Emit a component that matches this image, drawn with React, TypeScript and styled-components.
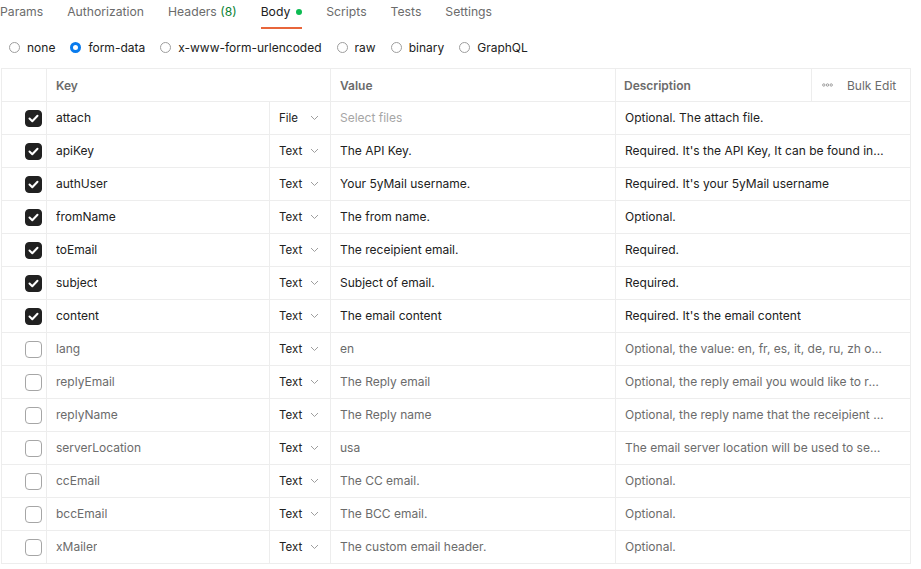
import React from "react";
import styled, { createGlobalStyle } from "styled-components";

const GlobalStyle = createGlobalStyle`
  body {
    margin: 0;
    background: #ffffff;
    font-family: Inter, "Noto Sans", sans-serif;
    font-size: 12px;
    color: #212121;
  }
`;

const Page = styled.div`
  width: 921px;
  height: 569px;
  overflow: hidden;
`;

const Tabs = styled.div`
  display: flex;
  gap: 24px;
  height: 29px;
  align-items: flex-start;
`;

const Tab = styled.div<{ $active?: boolean }>`
  display: flex;
  align-items: center;
  gap: 6px;
  height: 29px;
  padding-bottom: 4px;
  box-sizing: border-box;
  font-size: 12.2px;
  color: ${(p) => (p.$active ? "#212121" : "#6b6b6b")};
  border-bottom: 2px solid ${(p) => (p.$active ? "#e8663b" : "transparent")};
`;

const Count = styled.span`
  color: #0b8235;
`;

const Dot = styled.span`
  width: 6px;
  height: 6px;
  border-radius: 50%;
  background: #0cbb52;
`;

const Modes = styled.div`
  display: flex;
  align-items: center;
  gap: 15px;
  height: 36px;
  margin-bottom: 3px;
  padding-left: 9px;
`;

const Mode = styled.label`
  display: flex;
  align-items: center;
  gap: 7px;
  font-size: 12px;
  color: #212121;
`;

const Radio = styled.span<{ $on?: boolean }>`
  box-sizing: border-box;
  width: 11px;
  height: 11px;
  border-radius: 50%;
  border: ${(p) => (p.$on ? "3.5px solid #097bed" : "1px solid #9e9e9e")};
  background: #fff;
`;

const Table = styled.div`
  margin-left: 1px;
  width: 909px;
  border-top: 1px solid #ededed;
  border-left: 1px solid #ededed;
`;

const Row = styled.div`
  display: grid;
  grid-template-columns: 45px 223px 61px 285px 295px;
  height: 33px;
`;

const Cell = styled.div`
  box-sizing: border-box;
  display: flex;
  align-items: center;
  padding: 0 9px 1px;
  border-right: 1px solid #ededed;
  border-bottom: 1px solid #ededed;
  overflow: hidden;
  white-space: nowrap;
  font-size: 12px;
`;

const DescCell = styled(Cell)`
  padding-right: 26px;
`;

const CheckCell = styled(Cell)`
  justify-content: flex-end;
  padding: 0 4px 0 0;
`;

const HeadCell = styled(Cell)<{ $span?: number }>`
  grid-column: span ${(p) => p.$span ?? 1};
  padding-bottom: 0;
  font-weight: 600;
  color: #6b6b6b;
`;

const DescHead = styled(Cell)`
  padding: 0;
`;

const DescTitle = styled.div`
  flex: 1;
  height: 100%;
  display: flex;
  align-items: center;
  padding-left: 8px;
  font-weight: 600;
  color: #6b6b6b;
  border-right: 1px solid #ededed;
`;

const BulkEdit = styled.div`
  box-sizing: border-box;
  flex: 0 0 98px;
  display: flex;
  align-items: center;
  gap: 14px;
  padding-left: 10px;
  color: #6b6b6b;
`;

const Text = styled.span<{ $tone: "main" | "muted" | "hint" }>`
  color: ${(p) =>
    p.$tone === "main" ? "#212121" : p.$tone === "muted" ? "#6b6b6b" : "#a6a6a6"};
  overflow: hidden;
  text-overflow: ellipsis;
`;

const TypeCell = styled(Cell)`
  justify-content: space-between;
  padding: 0 11px 0 9px;
`;

const TypeLabel = styled.span`
  color: #212121;
  font-size: 11.5px;
  line-height: 14px;
`;

const Box = styled.span<{ $on: boolean }>`
  box-sizing: border-box;
  width: 17px;
  height: 17px;
  border-radius: 4px;
  display: flex;
  align-items: center;
  justify-content: center;
  background: ${(p) => (p.$on ? "#212121" : "#fff")};
  border: 1px solid ${(p) => (p.$on ? "#212121" : "#a6a6a6")};
`;

type Param = {
  key: string;
  type: string;
  value: string;
  desc: string;
  on: boolean;
};

const params: Param[] = [
  { key: "attach", type: "File", value: "", desc: "Optional. The attach file.", on: true },
  { key: "apiKey", type: "Text", value: "The API Key.", desc: "Required. It's the API Key, It can be found in the settings page of your 5yMail account", on: true },
  { key: "authUser", type: "Text", value: "Your 5yMail username.", desc: "Required. It's your 5yMail username", on: true },
  { key: "fromName", type: "Text", value: "The from name.", desc: "Optional.", on: true },
  { key: "toEmail", type: "Text", value: "The receipient email.", desc: "Required.", on: true },
  { key: "subject", type: "Text", value: "Subject of email.", desc: "Required.", on: true },
  { key: "content", type: "Text", value: "The email content", desc: "Required. It's the email content", on: true },
  { key: "lang", type: "Text", value: "en", desc: "Optional, the value: en, fr, es, it, de, ru, zh or ja", on: false },
  { key: "replyEmail", type: "Text", value: "The Reply email", desc: "Optional, the reply email you would like to receive", on: false },
  { key: "replyName", type: "Text", value: "The Reply name", desc: "Optional, the reply name that the receipient will see", on: false },
  { key: "serverLocation", type: "Text", value: "usa", desc: "The email server location will be used to send the email", on: false },
  { key: "ccEmail", type: "Text", value: "The CC email.", desc: "Optional.", on: false },
  { key: "bccEmail", type: "Text", value: "The BCC email.", desc: "Optional.", on: false },
  { key: "xMailer", type: "Text", value: "The custom email header.", desc: "Optional.", on: false },
];

const Chevron = () => (
  <svg width="9" height="6" viewBox="0 0 9 6" fill="none">
    <path d="M1 1l3.5 3.5L8 1" stroke="#9e9e9e" strokeWidth="1" />
  </svg>
);

const Tick = () => (
  <svg width="11" height="9" viewBox="0 0 11 9" fill="none">
    <path d="M1.5 4.5l2.8 2.8L9.5 1.8" stroke="#fff" strokeWidth="2" strokeLinecap="round" strokeLinejoin="round" />
  </svg>
);

const Dots = () => (
  <svg width="11" height="4" viewBox="0 0 11 4" fill="none">
    <circle cx="1.8" cy="2" r="1.2" stroke="#8a8a8a" strokeWidth="0.8" />
    <circle cx="5.5" cy="2" r="1.2" stroke="#8a8a8a" strokeWidth="0.8" />
    <circle cx="9.2" cy="2" r="1.2" stroke="#8a8a8a" strokeWidth="0.8" />
  </svg>
);

const tabs = ["Params", "Authorization", "Headers", "Body", "Scripts", "Tests", "Settings"];
const modes = ["none", "form-data", "x-www-form-urlencoded", "raw", "binary", "GraphQL"];

function App() {
  return (
    <Page>
      <GlobalStyle />
      <Tabs>
        {tabs.map((t) => (
          <Tab key={t} $active={t === "Body"}>
            {t === "Headers" ? (
              <span>
                Headers <Count>(8)</Count>
              </span>
            ) : (
              t
            )}
            {t === "Body" && <Dot />}
          </Tab>
        ))}
      </Tabs>
      <Modes>
        {modes.map((m) => (
          <Mode key={m}>
            <Radio $on={m === "form-data"} />
            {m}
          </Mode>
        ))}
      </Modes>
      <Table>
        <Row>
          <HeadCell />
          <HeadCell $span={2}>Key</HeadCell>
          <HeadCell>Value</HeadCell>
          <DescHead>
            <DescTitle>Description</DescTitle>
            <BulkEdit>
              <Dots />
              Bulk Edit
            </BulkEdit>
          </DescHead>
        </Row>
        {params.map((p) => {
          const tone = p.on ? "main" : "muted";
          return (
            <Row key={p.key}>
              <CheckCell>
                <Box $on={p.on}>{p.on && <Tick />}</Box>
              </CheckCell>
              <Cell>
                <Text $tone={tone}>{p.key}</Text>
              </Cell>
              <TypeCell>
                <TypeLabel>{p.type}</TypeLabel>
                <Chevron />
              </TypeCell>
              <Cell>
                {p.value ? (
                  <Text $tone={tone}>{p.value}</Text>
                ) : (
                  <Text $tone="hint">Select files</Text>
                )}
              </Cell>
              <DescCell>
                <Text $tone={tone}>{p.desc}</Text>
              </DescCell>
            </Row>
          );
        })}
      </Table>
    </Page>
  );
}

export default App;
